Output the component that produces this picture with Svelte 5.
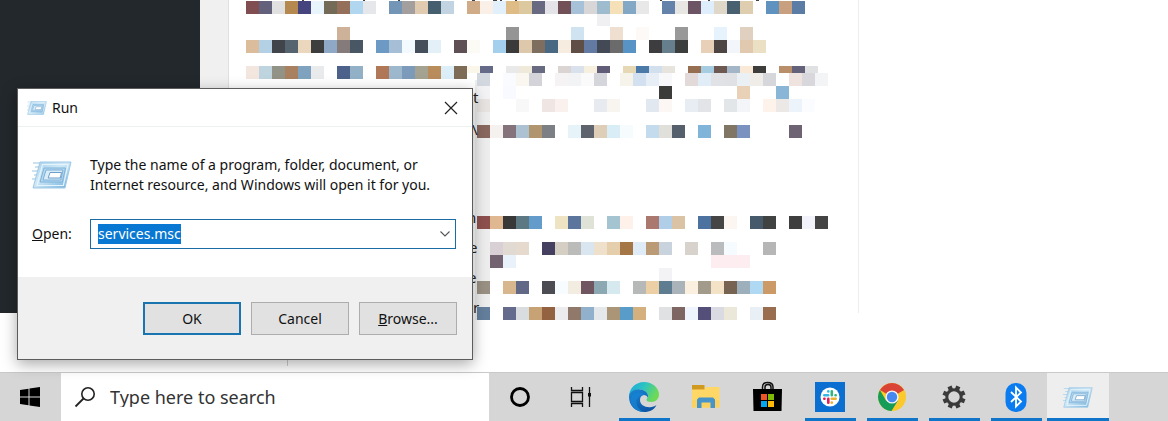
<script>
  import { onMount } from 'svelte';

  let command = $state('services.msc');
  let query = $state('');
  let commandField;

  onMount(() => {
    commandField.focus();
    commandField.select();
  });

  // Each band of the pixelated page: left, top, height, one colour per 13px cell ("-" is empty).
  const bands = [
    [246, 1, 13, '804d50 62607a e0e0e0 b5884f 45447f e8f5fd 736b57 94705b b0d7ef e6e7ea - 7395b6 a39f9e e0cab0 455f6e c2d4e2 - cfab88 fbf0e8 e2f0fb dfbc86 dcc9a0 686a82 e4e4e8 715058 a7c2d8 d8d6d6 9fbccf f6e0b8 82a8c5 e8e8e8 - 6582ab e8e6e2 6d5465 deeefc dfd8c8 48606f dfcdb0 - 6092c0 c8a080 5b7ca5'],
    [597, 14, 12, 'f0f0f2'],
    [337, 27, 13, 'cdb199 - - - - - - - - - - - - 959595 - - - - cfe3f0 - - efdfd0 - fdf9f7 - - 999999 - - e6f2fc - dfd0bf'],
    [246, 40, 13, 'dcbd9b b3d0e4 41444b 56646f ead7bd 3d3d3d 8fa8c5 857b7a 495765 - 6c9ac5 a6bfd6 f2f9ff 454e5b e4f0f8 - 5f5056 fbfaf5 - a4d0ee 3a3a3a dec8ac 7d6e60 496882 f7ece0 5f4e45 637ba2 444a55 6b6b6c 5794c5 - 3d3d3f 677e8c 3c3d3d - e8d0b8 4c4543 f2f6fa e0c9ae ece0c4'],
    [246, 66, 13, 'f3e6df bed4df 929286 a98060 7fa3be e9eaec - 4c628a 92b1c7 - b17858 9db8cd 7c9bbb a4a392 b98c5c dceef8 7e6c56'],
    [467, 66, 7, 'fbf6ea 656a88 - e9e9ea efe9d9 686a82 - dad5d3 d9e2ec f8f0df 615d78 - e7d8b5 4c7aa8 d2e0ed e6e4dd - 966f52 a5cce0 6d5852 a2b6c8 fae9d6 3d3e3c - b98f69 63627a e0e1e3'],
    [477, 73, 13, 'd3d7e0 - fafbff faf7f0 d3d3d9 - f5f3f3 f2f3f4 fafafa d5d5dc - f6f3ea d2e0f0 e8eef6 f8f8fa - e1dad8 e1edf6 e1e2e5 e0e1e4 eaf0f4 f0ece8 d5d7da - efe3e0 d7d7dc f3f4f6'],
    [477, 86, 13, 'f3f3f5 - f8faff - - - - - - - - - - - 3c3c3a - - - - - e9d1b7 - - 89b6d7'],
    [477, 99, 13, 'e8e4e2 - - f8f8f8 - efe5e3 faf0ee - - e7ebf0 f8f5f0 - - e1e8f0 fcf7f5 - e7edf2 e2e4e8 - e3e6e9 f4f5f8 - fdf3ea ebe8e6 edf3fb fbfcff'],
    [477, 125, 13, '89685e f4f1ee 84737a acc1d2 b1956f 7c8084 - e6f4f9 5e636d dfceb7 d8edf5 f6fcfe - c4dbee e0dfda 56606d - 80b4d9 - 807663 7b92c0 - - - 6d6373'],
    [477, 216, 13, '8e504e dfb891 383838 5c7983 639bca - eee4c4 5b759d dfe3d7 - a5c4d2 fdf1ea - aa786e b0cee8 d9c3a4 - 4d729f 454545 fcf6f2 - 465a6c 414342 - 3e3e3f f2f3fa 444444'],
    [490, 242, 13, 'd9d0d6 e1dad2 e6d9cd - 454060 d5cec2 bbbbb9 d9e6f0 efe0cb e4ceac a57746 dfecf8 bb9b75 c8d3de - d7d3cc - b9bbbc f5fbff - - b6b6b7'],
    [490, 255, 13, '73626f e9f2fa - - - - - - - - - - - - - - - fdedf0 fdedf0 fdedf0'],
    [659, 268, 13, 'f3f3f6'],
    [477, 281, 13, '9a9184 - d8b78e 616987 - 4c4d52 f6fcff f2ece1 705660 8ca8b3 d6e9ef - b7b9b8 edcfa5 5e7d91 aab3ba fbf0e0 a29a8b f3e2c5 776351 9cafba afd8f2 cb9a67'],
    [477, 307, 13, '647f9d - 646b8c d9dddf c7a275 936341 ececee 90786a 91b0cc e5e8ea aa9677 599cc9 d3b07e - e0e1e3 7e6663 eef5fc 534f78 dadae3 ece8d9 - e8eff5 996d50']
  ];

  const cells = bands.flatMap(([x, y, h, row]) =>
    row.split(' ')
      .map((c, i) => ({ x: x + i * 13, y, h, c }))
      .filter((cell) => cell.c !== '-')
  );

  const letters = [
    ['t', 473, 103], ['\\', 472, 135], ['n', 467, 223], ['e', 469, 253], ['e', 468, 283], ['r', 473, 313]
  ];

  const apps = [
    { id: 'cortana', name: 'Cortana' },
    { id: 'tasks', name: 'Task View' },
    { id: 'edge', name: 'Microsoft Edge', open: true },
    { id: 'files', name: 'File Explorer' },
    { id: 'store', name: 'Microsoft Store' },
    { id: 'slack', name: 'Slack', open: true },
    { id: 'chrome', name: 'Google Chrome', open: true },
    { id: 'settings', name: 'Settings', open: true },
    { id: 'bluetooth', name: 'Bluetooth', open: true },
    { id: 'run', name: 'Run', open: true, active: true }
  ];

  const teeth = [0, 45, 90, 135, 180, 225, 270, 315];
</script>

{#snippet runIcon(size)}
  <svg width={size} height={size * 0.7} viewBox="0 0 40 28" aria-hidden="true">
    <defs>
      <linearGradient id="run-frame-{size}" x1="0" y1="0" x2="1" y2="1">
        <stop offset="0" stop-color="#a5cfeb" />
        <stop offset=".45" stop-color="#cfe8f7" />
        <stop offset="1" stop-color="#6fafdb" />
      </linearGradient>
    </defs>
    <path d="M1 2h9M3 6h6M0 10h8M2 14h6M0 18h6" stroke="#b9d9ee" stroke-width="1.500" />
    <path d="M8 1h31l-6 26H1z" fill="url(#run-frame-{size})" stroke="#9fc9e5" />
    <path d="M10.500 3.500h25.500l-4.600 21H5z" fill="none" stroke="#e6f4fc" stroke-width="1.200" />
    <path d="M12 7h21.500l-3.200 14H8z" fill="#b4d8f0" stroke="#7fb2d9" />
    <path d="M14 9h17l-2.200 10H11z" fill="#d9edf8" stroke="#7fb0d6" />
    <path d="M18 11.500h11.500l-1.200 5.500H16.200z" fill="#fff" stroke="#6d9fca" />
  </svg>
{/snippet}

<div class="screen">
  <main class="desktop">
    <div class="page">
      <div class="sidebar"></div>
      <div class="gutter"></div>
      <div class="sheet"></div>
    </div>

    <svg class="mosaic" width="870" height="372" viewBox="0 0 870 372" aria-hidden="true">
      <rect x="475" y="80" width="15" height="240" fill="#eeeeef" />
      <path d="M858.500 0V313" stroke="#ededed" />
      <path d="M287.500 350V366" stroke="#cfcfcf" />
      <path d="M302 0h2M363 0h2M398 0h2M472 0h3M493 0h4M500 0h2M515 0h2M660 0h2M708 0h2M756 0h3" stroke="#444" stroke-width="2" />
      {#each cells as cell}
        <rect x={cell.x} y={cell.y} width="13" height={cell.h} fill="#{cell.c}" />
      {/each}
      {#each letters as [letter, x, y]}
        <text {x} {y}>{letter}</text>
      {/each}
    </svg>

    <form class="dialog" aria-labelledby="run-title" onsubmit={(e) => e.preventDefault()}>
      <header class="titlebar">
        {@render runIcon(20)}
        <h1 id="run-title">Run</h1>
        <button class="close" type="button" aria-label="Close">
          <svg width="14" height="14" viewBox="0 0 14 14"><path d="M1 1l12 12M13 1L1 13" stroke="#222" stroke-width="1.200" /></svg>
        </button>
      </header>
      <div class="body">
        <div class="intro">
          {@render runIcon(40)}
          <p>Type the name of a program, folder, document, or<br />Internet resource, and Windows will open it for you.</p>
        </div>
        <div class="field">
          <label for="command"><u>O</u>pen:</label>
          <div class="combo">
            <input id="command" type="text" autocomplete="off" spellcheck="false" bind:value={command} bind:this={commandField} />
            <button type="button" aria-label="Show history">
              <svg width="10" height="6" viewBox="0 0 10 6"><path d="M.5.5L5 5 9.500.5" fill="none" stroke="#555" stroke-width="1.100" /></svg>
            </button>
          </div>
        </div>
      </div>
      <footer class="actions">
        <button class="primary" type="submit">OK</button>
        <button type="button">Cancel</button>
        <button type="button"><span><u>B</u>rowse...</span></button>
      </footer>
    </form>
  </main>

  <nav class="taskbar" aria-label="Taskbar">
    <button class="start" aria-label="Start">
      <svg width="20" height="20" viewBox="0 0 20 20"><path d="M0 3l8.500-1.300V9.500H0zM9.500 1.500L20 0v9.500H9.500zM0 10.500h8.500v7.800L0 17zM9.500 10.500H20V20L9.500 18.500z" /></svg>
    </button>
    <label class="search">
      <svg width="22" height="22" viewBox="0 0 22 22" aria-hidden="true">
        <circle cx="14" cy="8" r="6.200" fill="none" stroke="#222" stroke-width="1.600" />
        <path d="M9.500 12.500L1.500 20.500" stroke="#222" stroke-width="1.800" />
      </svg>
      <input type="text" aria-label="Search" placeholder="Type here to search" bind:value={query} />
    </label>
    {#each apps as app}
      <button class="app" class:open={app.open} class:active={app.active} aria-label={app.name}>
        {#if app.id === 'cortana'}
          <svg width="32" height="32" viewBox="0 0 32 32"><circle cx="16" cy="16" r="8.500" fill="none" stroke="#000" stroke-width="2.800" /></svg>
        {:else if app.id === 'tasks'}
          <svg width="32" height="32" viewBox="0 0 32 32" fill="none" stroke="#111" stroke-width="1.300">
            <path d="M5.500 6v3.500h11V6M5.500 26v-3.500h11V26M5.500 11.500h11v9h-11zM23.500 6v20" />
            <path d="M22 12h3v3.500h-3z" fill="#111" stroke="none" />
          </svg>
        {:else if app.id === 'edge'}
          <svg width="32" height="32" viewBox="0 0 32 32">
            <defs>
              <linearGradient id="edge-top" x1="0" y1="0" x2="1" y2=".4">
                <stop offset="0" stop-color="#1aa8dd" /><stop offset=".5" stop-color="#2dc3c3" /><stop offset="1" stop-color="#6dda55" />
              </linearGradient>
              <linearGradient id="edge-body" x1="0" y1="0" x2=".6" y2="1">
                <stop offset="0" stop-color="#1b87d4" /><stop offset="1" stop-color="#0d56a6" />
              </linearGradient>
            </defs>
            <path d="M1 16C1 7.500 7.500 1 16 1c8.500 0 15 6 15 12.500 0 4.500-3.300 7.500-7.500 7.500-3.200 0-5-1-5-2.300 0-1 1.300-1.500 1.300-3.700C19.800 11 16 8.500 11 8.500 6 8.500 2 11.500 1 16z" fill="url(#edge-top)" />
            <path d="M1 16c0-5 4.500-7.800 9.500-7.800 5.500 0 9.500 3 9.500 6.800 0 .5-.1 1-.3 1.500-.6-1.500-2-2.500-3.700-2.500-2.500 0-4 2.200-4 5 0 4.500 4.500 7.500 10 7.200 2.500-.1 4.500-.9 6.500-2.200C26.500 28.500 22 31 16 31 7.500 31 1 24.500 1 16z" fill="url(#edge-body)" />
            <path d="M16.500 14c-5 .2-8 3.200-8 7 0 4 2.500 8 7.500 10C8.500 31 2.500 25.500 2.500 19.500 2.500 14.500 6.500 11.500 11 11.500c2.500 0 4.500 1 5.500 2.500z" fill="#1784d4" opacity=".75" />
          </svg>
        {:else if app.id === 'files'}
          <svg width="32" height="32" viewBox="0 0 32 32">
            <path d="M2 8h12l2-2h13.500v20.500H2z" fill="#ffd766" />
            <path d="M2 4h12.500v4.500H2z" fill="#d09a20" />
            <path d="M2 19h27.500v7.500H2z" fill="#fbd260" />
            <path d="M7 27V18.500L9 16.500h14l2 2V27h-4.500v-5.500h-9V27z" fill="#4694c9" />
          </svg>
        {:else if app.id === 'store'}
          <svg width="32" height="32" viewBox="0 0 32 32">
            <path d="M10.500 9V6c0-3 2-4.500 5-4.500S21 3 21 6v3M13 9V6c0-2 1-2.500 3-2.500S19 4 19 6v3" fill="none" stroke="#111" stroke-width="1.500" />
            <path d="M1 8h29l-.5 22h-28z" fill="#000" />
            <path d="M9 13h6v6H9z" fill="#f05325" /><path d="M16 13h6v6h-6z" fill="#80bb04" />
            <path d="M9 20h6v6H9z" fill="#06a5ef" /><path d="M16 20h6v6h-6z" fill="#ffba06" />
          </svg>
        {:else if app.id === 'slack'}
          <svg width="32" height="32" viewBox="0 0 32 32">
            <path d="M1 1h30v30H1z" fill="#0a6fd0" />
            <circle cx="16" cy="16" r="9.500" fill="#fff" />
            <g fill="none" stroke-width="2.600" stroke-linecap="round">
              <path d="M10.300 14.300h3.900M14.300 10.300v.2" stroke="#36b7e8" />
              <path d="M17.800 10.300v3.900M21.700 14.300h-.2" stroke="#2eb67d" />
              <path d="M17.800 17.800h3.900M17.800 21.700v-.2" stroke="#ecb22e" />
              <path d="M14.300 17.800v3.900M10.300 17.800h.2" stroke="#e01e5a" />
            </g>
          </svg>
        {:else if app.id === 'chrome'}
          <svg width="32" height="32" viewBox="0 0 32 32">
            <circle cx="16" cy="16" r="14" fill="#fbc92b" />
            <path d="M16 16L3.900 9A14 14 0 0 1 28.100 9z" fill="#da4437" />
            <path d="M3.900 9A14 14 0 0 0 15.500 30L22 19.500H10z" fill="#149c58" />
            <circle cx="16" cy="16" r="6.600" fill="#f4f4f4" />
            <circle cx="16" cy="16" r="5.200" fill="#4787f0" />
          </svg>
        {:else if app.id === 'settings'}
          <svg width="32" height="32" viewBox="0 0 32 32">
            <circle cx="16" cy="16" r="7.200" fill="none" stroke="#3a3a3a" stroke-width="3" />
            {#each teeth as angle}
              <path d="M13.800 8.500V4.500h4.400v4z" fill="#3a3a3a" transform="rotate({angle + 22} 16 16)" />
            {/each}
          </svg>
        {:else if app.id === 'bluetooth'}
          <svg width="32" height="32" viewBox="0 0 32 32">
            <rect x="5.500" y="2" width="21" height="29" rx="10" fill="#0a7cf0" />
            <path d="M11 11l10 9.500-5 5V6.500l5 5L11 21" fill="none" stroke="#fff" stroke-width="1.800" />
          </svg>
        {:else}
          {@render runIcon(30)}
        {/if}
      </button>
    {/each}
  </nav>
</div>

<style>
  :global(body) { margin: 0; }
  .screen {
    display: flex;
    flex-direction: column;
    min-height: 100vh;
    overflow: hidden;
    background: #fff;
    color: #111;
    font: 14px/20px "Noto Sans", sans-serif;
  }
  button, input { font: inherit; color: inherit; border-radius: 0; }
  button { padding: 0; border: 0; background: none; }
  svg { display: block; flex: none; }

  .desktop {
    position: relative;
    display: flex;
    flex: 1;
    padding-bottom: 59px;
    border-bottom: 1px solid #c9c9c9;
    box-sizing: border-box;
  }
  .page { display: flex; flex: 1; }
  .sidebar { width: 200px; background: #23282c; }
  .gutter { width: 28px; background: #f0f0f0; border-right: 1px solid #e0e0e0; }
  .sheet { flex: 1; background: #fff; }
  .mosaic { position: absolute; top: 0; left: 0; }
  .mosaic text { font-size: 15px; fill: #222; }

  .dialog {
    position: absolute;
    top: 88px;
    left: 17px;
    width: 456px;
    box-sizing: border-box;
    border: 1px solid #5c5c5c;
    background: #fff;
    box-shadow: 0 4px 14px rgb(0 0 0 / 34%);
  }
  .titlebar {
    display: flex;
    align-items: center;
    gap: 5px;
    height: 37px;
    padding-left: 9px;
    border-bottom: 1px solid #edf0f1;
  }
  h1 { flex: 1; margin: 0; font-size: 14px; font-weight: 400; }
  .close { display: grid; place-items: center; width: 42px; height: 37px; }
  .body { padding: 28px 16px 28px 14px; }
  .intro { display: flex; align-items: center; gap: 18px; }
  .intro p { margin: 0; white-space: nowrap; }
  .field { display: flex; align-items: center; margin-top: 24px; }
  .field label { width: 58px; }
  .combo {
    display: flex;
    flex: 1;
    align-items: center;
    height: 30px;
    box-sizing: border-box;
    border: 1px solid #1a6ca3;
  }
  .combo input {
    flex: 1;
    min-width: 0;
    padding: 0 0 0 7px;
    border: 0;
    outline: 0;
    background: none;
  }
  .combo input::selection { background: #0878d2; color: #fff; }
  .combo button { display: grid; place-items: center; width: 20px; height: 28px; }
  .actions {
    display: flex;
    justify-content: flex-end;
    gap: 10px;
    padding: 25px 15px 24px;
    background: #f0f0f0;
  }
  .actions button {
    width: 98px;
    height: 33px;
    border: 1px solid #adadad;
    background: #e1e1e1;
  }
  .actions .primary { border: 2px solid #1a74b0; }

  .taskbar { display: flex; height: 48px; background: #d6d6d6; }
  .start { display: grid; place-items: center; width: 60px; margin-right: 1px; }
  .search {
    display: flex;
    flex: 0 1 428px;
    align-items: center;
    gap: 14px;
    padding-left: 13px;
    box-sizing: border-box;
    background: #fff;
  }
  .search input {
    flex: 1;
    min-width: 0;
    padding: 0;
    border: 0;
    outline: 0;
    background: none;
    font-size: 18px;
  }
  .search input::placeholder { color: #333; opacity: 1; }
  .app {
    display: grid;
    place-items: center;
    width: 62px;
    box-sizing: border-box;
    position: relative;
  }
  .open::after {
    content: "";
    position: absolute;
    right: 5px;
    bottom: 0;
    left: 6px;
    height: 3px;
    background: #0f75c9;
  }
  .active { background: #eee; }
  .active::after { right: 0; left: 0; }
</style>
